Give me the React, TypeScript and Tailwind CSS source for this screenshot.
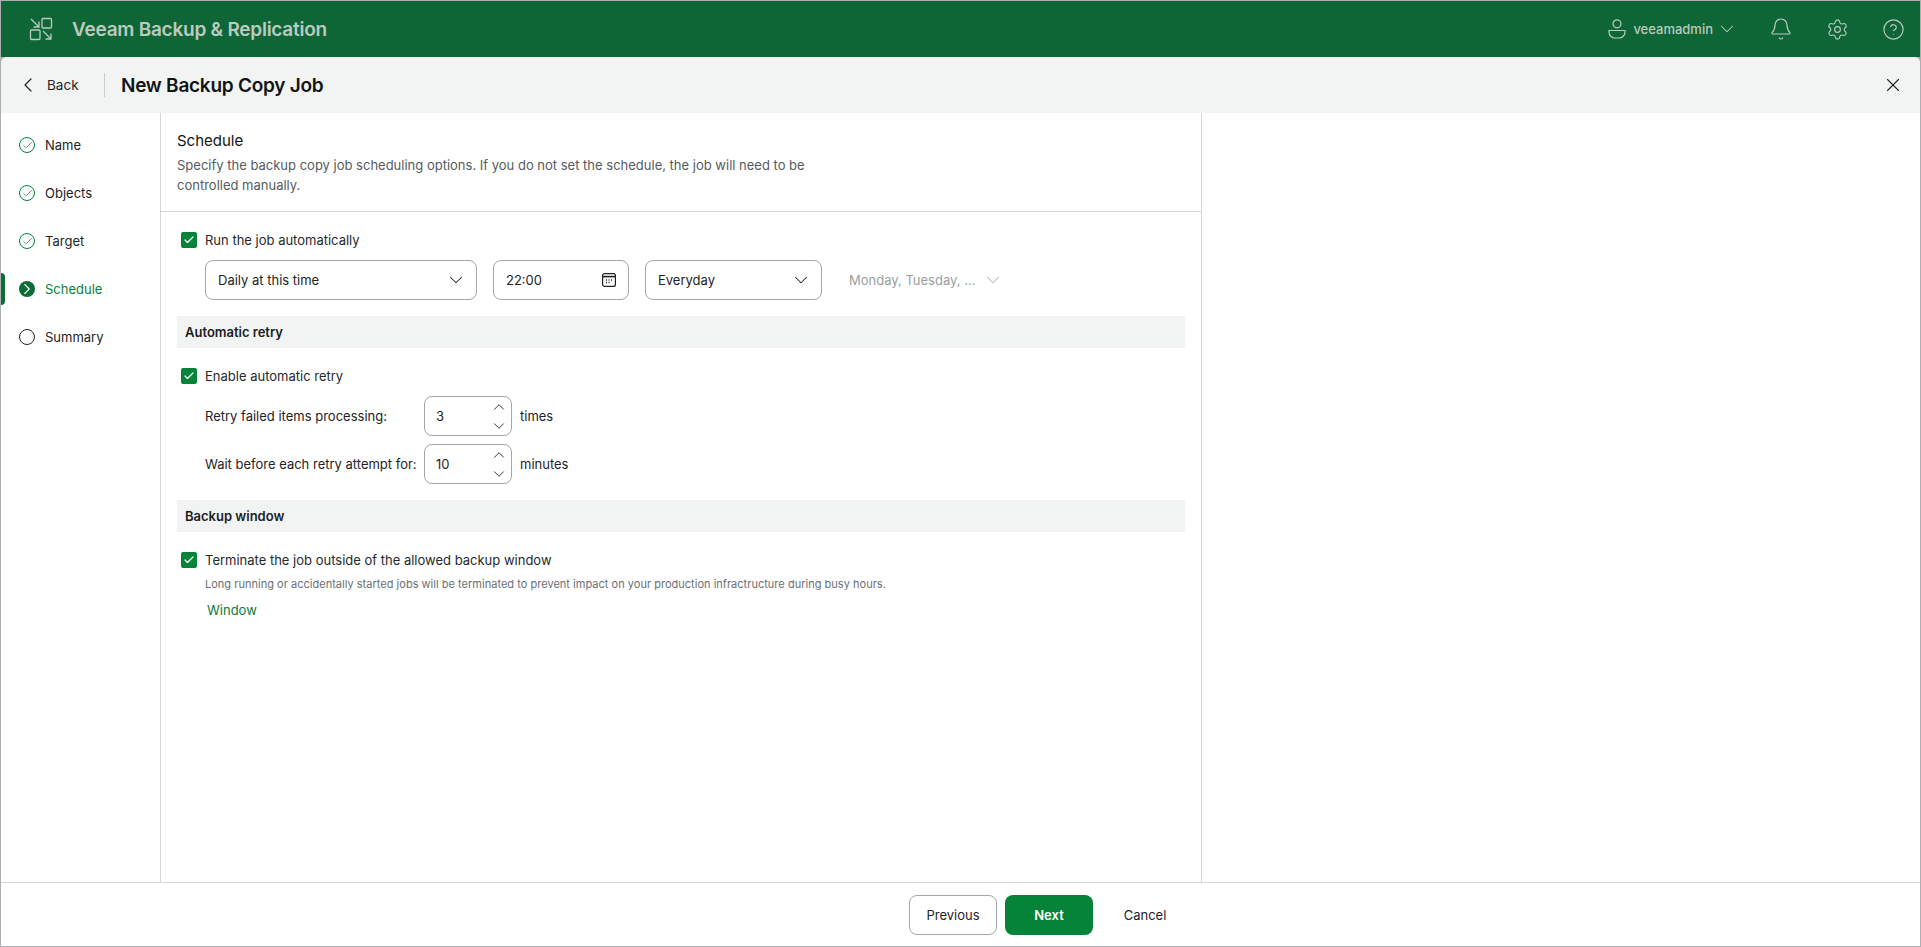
import { Bell, Check, ChevronDown, ChevronLeft, ChevronRight, ChevronUp, CircleHelp, Settings, X } from "lucide-react";

const steps = [
  { label: "Name", state: "done" },
  { label: "Objects", state: "done" },
  { label: "Target", state: "done" },
  { label: "Schedule", state: "active" },
  { label: "Summary", state: "todo" },
];

function Logo() {
  return (
    <svg width="24" height="24" viewBox="0 0 24 24" fill="none" stroke="currentColor" strokeWidth="1.3" className="text-[#bccabf]">
      <rect x="13" y="1.5" width="9.5" height="9.5" rx="1" />
      <rect x="1.5" y="13" width="9.5" height="9.5" rx="1" />
      <path d="M2 2l8 8M10 4.5V10H4.5" />
      <path d="M14 14l8 8M22 16.5V22h-5.5" />
    </svg>
  );
}

function UserIcon() {
  return (
    <svg width="18" height="20" viewBox="0 0 18 20" fill="none" stroke="currentColor" strokeWidth="1.2">
      <circle cx="9" cy="4.8" r="4" />
      <path d="M1 11.5h16v1.5a6 6 0 0 1-6 6H7a6 6 0 0 1-6-6z" />
    </svg>
  );
}

function CalendarIcon() {
  return (
    <svg width="16" height="16" viewBox="0 0 16 16" fill="none" stroke="#1f2326" strokeWidth="1.2">
      <rect x="1.6" y="1.6" width="12.8" height="12.8" rx="2" />
      <path d="M1.6 4.6h12.8" strokeWidth="1.6" />
      <path d="M5 7.9h1M7.5 7.9h1M10 7.9h1M5 10.4h1M7.5 10.4h1" strokeWidth="1.5" />
    </svg>
  );
}

function StepIcon({ state }: { state: string }) {
  if (state === "done") {
    return (
      <span className="flex h-4 w-4 items-center justify-center rounded-full border border-[#058338] text-[#058338]">
        <Check size={11} strokeWidth={1.6} className="shrink-0" />
      </span>
    );
  }
  if (state === "active") {
    return (
      <span className="flex h-4 w-4 items-center justify-center rounded-full bg-[#0a6e36] text-white">
        <ChevronRight size={18} strokeWidth={1.5} className="shrink-0" />
      </span>
    );
  }
  return <span className="h-4 w-4 rounded-full border border-[#1f2326]" />;
}

function CheckRow({ label }: { label: string }) {
  return (
    <div className="flex h-5 items-center pl-1">
      <span className="flex h-4 w-4 items-center justify-center rounded-[2px] bg-[#058338] text-white">
        <Check size={12} strokeWidth={2.5} />
      </span>
      <span className="ml-2 pt-[2px] text-[#25292c]">{label}</span>
    </div>
  );
}

function SectionHead({ title, className }: { title: string; className: string }) {
  return (
    <div className={`flex h-8 items-center bg-[#f2f4f3] pl-2 pt-[1px] text-[13px] font-semibold text-[#1a1d1f] ${className}`}>{title}</div>
  );
}

function Select({ value, className }: { value: string; className: string }) {
  return (
    <div className={`flex h-10 items-center justify-between rounded-lg border border-[#a3a7aa] pl-3 pr-[9px] ${className}`}>
      <span className="pt-[2px]">{value}</span>
      <ChevronDown size={22} strokeWidth={1.1} />
    </div>
  );
}

function Spinner({ value }: { value: string }) {
  return (
    <div className="flex h-10 w-[88px] items-center justify-between rounded-lg border border-[#a3a7aa] pl-[11px] pr-[3px]">
      <span className="pt-[2px]">{value}</span>
      <span className="flex flex-col gap-[1px]">
        <ChevronUp size={18} strokeWidth={1.2} />
        <ChevronDown size={18} strokeWidth={1.2} />
      </span>
    </div>
  );
}

export default function App() {
  return (
    <div className="flex h-[947px] flex-col border border-[#adb0b1] bg-[#adb0b1] text-[13px] text-[#1f2326] [font-family:Inter,'Liberation_Sans',sans-serif]">
      <header className="flex h-[56px] shrink-0 items-center bg-[#0e6636] text-[#bccabf]">
        <div className="ml-[28px] mt-[-1px]">
          <Logo />
        </div>
        <span className="ml-[19px] pt-[2px] text-[19px] font-semibold tracking-[-0.25px]">Veeam Backup &amp; Replication</span>
        <div className="ml-auto flex items-center">
          <UserIcon />
          <span className="ml-[7px] pt-[1px] text-[13px] font-medium">veeamadmin</span>
          <ChevronDown size={22} strokeWidth={1.1} className="ml-[3px]" />
          <Bell size={24} strokeWidth={1.2} className="ml-[31px]" />
          <Settings size={23} strokeWidth={1.2} className="ml-[33px]" />
          <CircleHelp size={23} strokeWidth={1.2} className="ml-[33px] mr-[15px]" />
        </div>
      </header>

      <div className="flex min-h-0 flex-1 flex-col overflow-hidden rounded-t-[6px] bg-white">
        <div className="flex h-[56px] shrink-0 items-center bg-[#f2f4f3]">
          <ChevronLeft size={24} strokeWidth={1.2} className="ml-[15px]" />
          <span className="ml-[7px] w-[57px] text-[13.5px]">Back</span>
          <span className="h-6 w-px bg-[#c9cccd]" />
          <h1 className="ml-4 pt-[2px] text-[19px] font-semibold tracking-[-0.25px] text-[#111315]">New Backup Copy Job</h1>
          <X size={22} strokeWidth={1.2} className="ml-auto mr-[16px]" />
        </div>

        <div className="flex min-h-0 flex-1">
          <nav className="w-[160px] shrink-0 border-r border-[#d3d5d6] pt-2">
            {steps.map((step) => (
              <div
                key={step.label}
                className={`relative flex h-12 items-center pl-[18px] ${step.state === "active" ? "text-[#058338]" : ""}`}
              >
                {step.state === "active" && <span className="absolute left-0 top-2 h-8 w-1 rounded-r-sm bg-[#0a6e36]" />}
                <StepIcon state={step.state} />
                <span className="ml-[10px] pt-[1px]">{step.label}</span>
              </div>
            ))}
          </nav>

          <main className="w-[1041px] shrink-0 border-r border-[#d3d5d6]">
            <div className="h-[99px] border-b border-[#d3d5d6] px-4 pt-4">
              <h2 className="text-[15px] leading-6 text-[#111315]">Schedule</h2>
              <p className="mt-[2px] w-[660px] leading-5 text-[#565b5f]">
                Specify the backup copy job scheduling options. If you do not set the schedule, the job will need to be
                controlled manually.
              </p>
            </div>

            <div className="px-4 pt-[18px]">
              <CheckRow label="Run the job automatically" />
              <div className="ml-[28px] mt-[10px] flex items-center">
                <Select value="Daily at this time" className="w-[272px]" />
                <div className="ml-4 flex h-10 w-[136px] items-center justify-between rounded-lg border border-[#a3a7aa] pl-3 pr-[11px]">
                  <span className="pt-[2px]">22:00</span>
                  <CalendarIcon />
                </div>
                <Select value="Everyday" className="ml-4 w-[177px]" />
                <span className="ml-[27px] pt-[2px] text-[#9a9fa3]">Monday, Tuesday, ...</span>
                <ChevronDown size={22} strokeWidth={1} className="ml-[7px] text-[#9a9fa3]" />
              </div>

              <SectionHead title="Automatic retry" className="mt-4" />
              <div className="mt-[18px]">
                <CheckRow label="Enable automatic retry" />
              </div>
              <div className="ml-[28px] mt-[10px] flex h-10 items-center">
                <span className="w-[219px] pt-[2px]">Retry failed items processing:</span>
                <Spinner value="3" />
                <span className="ml-2 pt-[2px]">times</span>
              </div>
              <div className="ml-[28px] mt-2 flex h-10 items-center">
                <span className="w-[219px] pt-[2px]">Wait before each retry attempt for:</span>
                <Spinner value="10" />
                <span className="ml-2 pt-[2px]">minutes</span>
              </div>

              <SectionHead title="Backup window" className="mt-4" />
              <div className="mt-[18px]">
                <CheckRow label="Terminate the job outside of the allowed backup window" />
              </div>
              <p className="ml-[28px] mt-[6px] text-[11px] leading-4 tracking-[0.02px] text-[#6b7074]">
                Long running or accidentally started jobs will be terminated to prevent impact on your production infractructure
                during busy hours.
              </p>
              <p className="ml-[30px] mt-2 leading-5 text-[#0a7a3a]">Window</p>
            </div>
          </main>
        </div>

        <footer className="flex h-[64px] shrink-0 items-center justify-center gap-2 border-t border-[#d3d5d6] pl-[177px] pt-[1px]">
          <button className="h-10 w-[88px] rounded-lg border border-[#a3a7aa] bg-white pt-[2px]">Previous</button>
          <button className="h-10 w-[88px] rounded-lg bg-[#058338] pt-[2px] font-semibold text-white">Next</button>
          <button className="h-10 w-[88px] rounded-lg pt-[2px]">Cancel</button>
        </footer>
      </div>
    </div>
  );
}
